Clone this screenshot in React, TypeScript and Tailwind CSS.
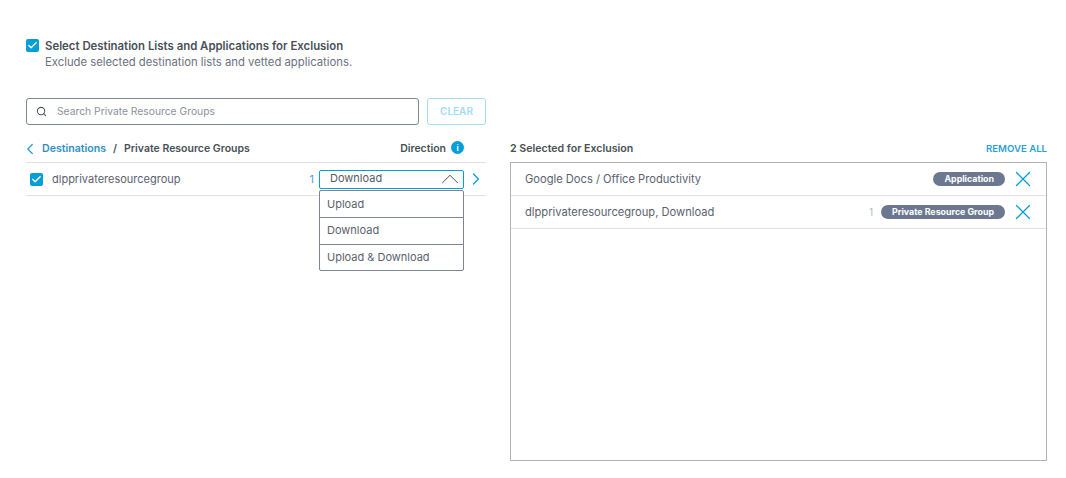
import { Check, ChevronLeft, ChevronRight, ChevronUp, Search, X } from "lucide-react";

const options = [
  { label: "Upload", className: "h-[27px] border-b border-[#7d8596] pt-[1px]" },
  { label: "Download", className: "h-[27px] border-b border-[#7d8596]" },
  { label: "Upload & Download", className: "h-[25px]" },
];

const selected = [
  { name: "Google Docs / Office Productivity", count: null, tag: "Application" },
  { name: "dlpprivateresourcegroup, Download", count: 1, tag: "Private Resource Group" },
];

const Checkbox = () => (
  <div className="flex size-[13px] shrink-0 items-center justify-center rounded-[2px] bg-[#049fd9]">
    <Check className="size-[11px] text-white" strokeWidth={3} />
  </div>
);

export default function App() {
  return (
    <div className="h-[478px] w-[1066px] overflow-hidden bg-white pl-[26px] pt-[39px] font-['Inter',sans-serif] text-[11px] text-[#4f5b6b]">
      <div className="flex items-start gap-[6px]">
        <Checkbox />
        <div>
          <div className="text-[11.4px] leading-[14px] font-semibold text-[#495057]">
            Select Destination Lists and Applications for Exclusion
          </div>
          <div className="mt-[2px] text-[11.3px] leading-[14px] text-[#6b7280]">
            Exclude selected destination lists and vetted applications.
          </div>
        </div>
      </div>

      <div className="mt-[29px] flex w-[460px] gap-2">
        <div className="flex h-[27px] w-[393px] items-center rounded-[3px] border border-[#7d8596] pl-[9px]">
          <Search className="size-[11px] text-[#4b5563]" strokeWidth={2.25} />
          <span className="ml-[10px] text-[10.3px] text-[#8b919c]">Search Private Resource Groups</span>
        </div>
        <div className="flex h-[27px] w-[59px] items-center justify-center rounded-[3px] border border-[#a3dcf3] text-[10px] font-semibold text-[#a3dcf3]">
          CLEAR
        </div>
      </div>

      <div className="mt-[10px] flex items-start gap-[24px]">
        <div className="w-[460px]">
          <div className="flex h-[28px] items-center border-b border-[#dfe1e4]">
            <ChevronLeft className="-ml-[5px] size-[18px] text-[#2b9bd6]" strokeWidth={1.6} />
            <span className="ml-[3px] text-[10.6px] font-semibold text-[#2f8fc4]">Destinations</span>
            <span className="ml-[7px] text-[10.5px] font-semibold text-[#495057]">/</span>
            <span className="ml-[7px] text-[10.5px] font-semibold text-[#495057]">Private Resource Groups</span>
            <span className="ml-auto text-[10.5px] font-semibold text-[#495057]">Direction</span>
            <div className="-mt-[2px] ml-[5px] mr-[22px] flex size-[13px] items-center justify-center rounded-full bg-[#049fd9] text-[8px] font-bold text-white">
              i
            </div>
          </div>
          <div className="flex h-[33px] items-center border-b border-[#dfe1e4] pl-[4px]">
            <Checkbox />
            <span className="ml-[9px] text-[11px] text-[#5a6270]">dlpprivateresourcegroup</span>
            <span className="ml-auto text-[11px] text-[#5b9bd5]">1</span>
            <div className="relative ml-[5px]">
              <div className="flex h-[19px] w-[145px] items-center justify-between rounded-[2px] border border-[#049fd9] pl-[10px]">
                <span className="-mt-[1px] text-[11px] text-[#555b66]">Download</span>
                <ChevronUp className="-my-[6px] -mr-[2px] size-[30px] text-[#3f4650]" strokeWidth={0.75} />
              </div>
              <div className="absolute left-0 top-[20px] w-[145px] rounded-[2px] border border-[#7d8596] bg-white">
                {options.map((option) => (
                  <div
                    key={option.label}
                    className={`flex items-center pl-[7px] text-[11px] text-[#5a6270] ${option.className}`}
                  >
                    {option.label}
                  </div>
                ))}
              </div>
            </div>
            <ChevronRight className="ml-[2px] size-[20px] text-[#049fd9]" strokeWidth={1.5} />
          </div>
        </div>

        <div className="w-[537px]">
          <div className="flex h-[27px] items-center justify-between pt-[1px]">
            <span className="text-[10.6px] font-semibold text-[#495057]">2 Selected for Exclusion</span>
            <span className="text-[9.6px] font-semibold text-[#2b9fd9]">REMOVE ALL</span>
          </div>
          <div className="h-[299px] border border-[#b0b3b8]">
            {selected.map((item) => (
              <div key={item.name} className="flex h-[33px] items-center border-b border-[#dfe1e4] pl-[14px] pr-[10px]">
                <span className="text-[11.15px] text-[#5a6270]">{item.name}</span>
                {item.count !== null && (
                  <span className="ml-auto text-[10px] text-[#a9bcc0]">{item.count}</span>
                )}
                <span
                  className={
                    item.count !== null
                      ? "ml-[8px] flex h-[14px] items-center rounded-full bg-[#6b7890] px-[11px] text-[8.85px] font-bold text-white"
                      : "ml-auto flex h-[14px] items-center rounded-full bg-[#6b7890] px-[11px] text-[8.85px] font-bold text-white"
                  }
                >
                  {item.tag}
                </span>
                <X className="-my-[6px] ml-[5px] size-[26px] shrink-0 text-[#049fd9]" strokeWidth={1.15} />
              </div>
            ))}
          </div>
        </div>
      </div>
    </div>
  );
}
